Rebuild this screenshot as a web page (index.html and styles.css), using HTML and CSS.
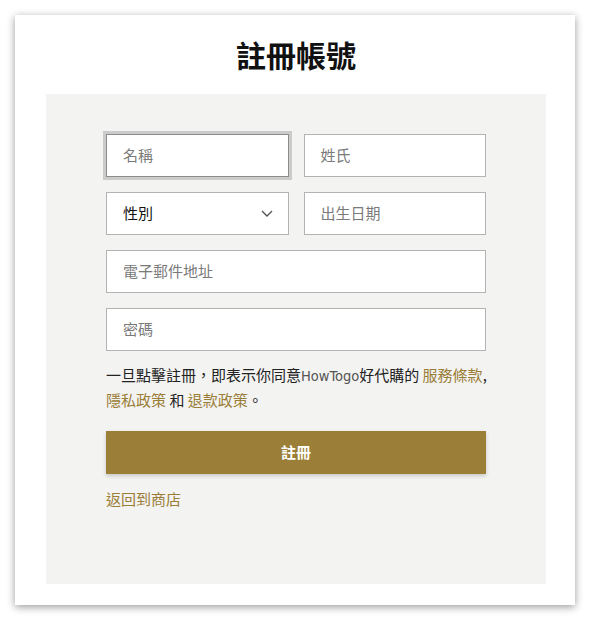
FILE: index.html
```html
<!DOCTYPE html>
<html lang="zh-Hant">
<head>
<meta charset="utf-8">
<title>註冊帳號</title>
<link rel="stylesheet" href="styles.css">
</head>
<body>
<div class="card">
  <h1 class="title">註冊帳號</h1>
  <div class="panel">
    <form class="form">
      <div class="row">
        <div class="field focused">名稱</div>
        <div class="field">姓氏</div>
      </div>
      <div class="row">
        <div class="field select"><span>性別</span>
          <svg class="chev" width="12" height="7" viewBox="0 0 12 7"><path d="M1 1l5 5 5-5" fill="none" stroke="#555" stroke-width="1.4"/></svg>
        </div>
        <div class="field">出生日期</div>
      </div>
      <div class="field">電子郵件地址</div>
      <div class="field">密碼</div>
      <p class="terms">一旦點擊註冊，即表示你同意<span class="brand">HowTogo</span>好代購的 <a class="link">服務條款</a>,<br><a class="link">隱私政策</a> 和 <a class="link">退款政策</a>。</p>
      <div class="btn">註冊</div>
      <a class="link back">返回到商店</a>
    </form>
  </div>
</div>
</body>
</html>
```
FILE: styles.css
```css
* { box-sizing: border-box; }
html, body { margin: 0; padding: 0; background: #fff; }
body {
  font-family: "Noto Sans CJK TC", "Noto Sans", sans-serif;
  padding: 15px 0 17px;
}
.card {
  width: 560px;
  height: 590px;
  margin: 0 auto;
  background: #fff;
  box-shadow: 0 2px 8px rgba(0,0,0,0.4);
  padding: 0 29px 0 31px;
  display: flex;
  flex-direction: column;
}
.title {
  margin: 0;
  height: 79px;
  display: flex;
  align-items: center;
  justify-content: center;
  font-size: 30px;
  font-weight: 700;
  color: #111;
  padding-bottom: 2px;
}
.panel {
  width: 500px;
  height: 490px;
  background: #f3f3f2;
  padding: 40px 60px 0;
}
.form {
  display: flex;
  flex-direction: column;
  gap: 15px;
}
.row {
  display: grid;
  grid-template-columns: 1fr 1fr;
  gap: 15px;
}
.field {
  height: 43px;
  background: #fff;
  border: 1px solid #b3b3b3;
  display: flex;
  align-items: center;
  padding-left: 16px;
  padding-bottom: 3px;
  font-size: 15px;
  color: #7a7a7a;
}
.field.focused {
  border-color: #8c8c8c;
  box-shadow: 0 0 0 3px #cbcbcb;
}
.field.select {
  color: #111;
  justify-content: space-between;
  padding-right: 15px;
}
.chev { display: block; margin-top: 2px; }
.terms {
  margin: -3px 0 0;
  font-size: 15px;
  line-height: 24px;
  color: #222;
  white-space: nowrap;
}
.brand {
  font-family: "Liberation Sans Narrow", "DejaVu Sans Condensed", "Roboto", sans-serif;
  color: #555;
  font-size: 14.5px;
}
.link { color: #9a7d36; }
.btn {
  margin-top: 4px;
  height: 43px;
  background: #9b7e37;
  color: #fff;
  font-size: 15px;
  font-weight: 700;
  display: flex;
  align-items: center;
  justify-content: center;
  padding-bottom: 3px;
  box-shadow: 0 2px 4px rgba(0,0,0,0.18);
}
.back {
  font-size: 15px;
  line-height: 24px;
  margin-top: -2px;
}
```
